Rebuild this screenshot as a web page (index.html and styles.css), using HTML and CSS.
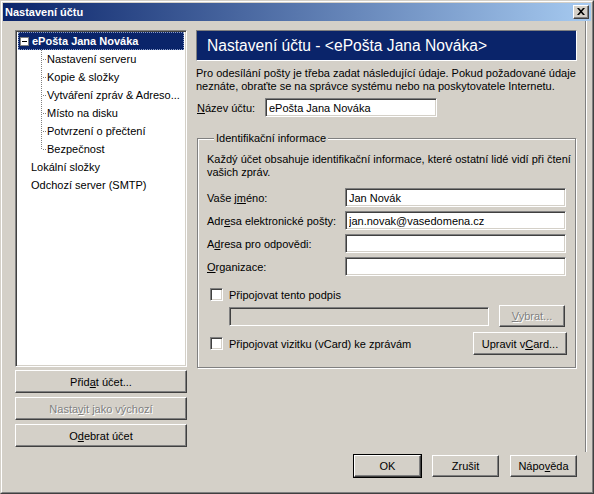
FILE: index.html
```html
<!DOCTYPE html>
<html lang="cs">
<head>
<meta charset="utf-8">
<title>Nastavení účtu</title>
<link rel="stylesheet" href="styles.css">
</head>
<body>
<div class="window">
  <div class="frame">
    <div class="titlebar">
      <span class="title">Nastavení účtu</span>
      <span class="close"><svg width="8" height="7" viewBox="0 0 8 7"><path d="M0 0h2l2 2.2L6 0h2L5 3.5 8 7H6L4 4.8 2 7H0l3-3.5z" fill="#000"/></svg></span>
    </div>
    <div class="content">
      <div class="left">
        <div class="tree">
          <div class="row top selected"><span class="minus"></span><span class="sel-text">ePošta Jana Nováka</span></div>
          <ul class="children">
            <li>Nastavení serveru</li>
            <li>Kopie &amp; složky</li>
            <li>Vytváření zpráv &amp; Adreso...</li>
            <li>Místo na disku</li>
            <li>Potvrzení o přečtení</li>
            <li class="last">Bezpečnost</li>
          </ul>
          <div class="row top plain">Lokální složky</div>
          <div class="row top plain">Odchozí server (SMTP)</div>
        </div>
        <button class="btn wide">Přid<u>a</u>t účet...</button>
        <button class="btn wide disabled">Nasta<u>v</u>it jako výchozí</button>
        <button class="btn wide">O<u>d</u>ebrat účet</button>
      </div>
      <div class="right">
        <div class="header">Nastavení účtu - &lt;ePošta Jana Nováka&gt;</div>
        <p class="intro">Pro odesílání pošty je třeba zadat následující údaje. Pokud požadované údaje<br>neznáte, obraťte se na správce systému nebo na poskytovatele Internetu.</p>
        <div class="name-row">
          <label class="name-label"><u>N</u>ázev účtu:</label>
          <input class="field name-field" type="text" value="ePošta Jana Nováka">
        </div>
        <fieldset class="group">
          <legend>Identifikační informace</legend>
          <p class="group-intro">Každý účet obsahuje identifikační informace, které ostatní lidé vidí při čtení<br>vašich zpráv.</p>
          <div class="frow"><label class="flabel">Vaše j<u>m</u>éno:</label><input class="field ffield" type="text" value="Jan Novák"></div>
          <div class="frow"><label class="flabel">Adr<u>e</u>sa elektronické pošty:</label><input class="field ffield" type="text" value="jan.novak@vasedomena.cz"></div>
          <div class="frow"><label class="flabel">A<u>d</u>resa pro odpovědi:</label><input class="field ffield" type="text" value=""></div>
          <div class="frow"><label class="flabel"><u>O</u>rganizace:</label><input class="field ffield" type="text" value=""></div>
          <div class="crow first"><span class="check"></span><span class="clabel">Připojovat tento podpis</span></div>
          <div class="sigrow"><input class="field sig" type="text" value="" disabled><button class="btn pick disabled"><u>V</u>ybrat...</button></div>
          <div class="crow vcard"><span class="check"></span><span class="clabel">Připojovat vizitku (vCard) ke zprávám</span><button class="btn edit">Upravit v<u>C</u>ard...</button></div>
        </fieldset>
      </div>
      <div class="edge"></div>
    </div>
    <div class="footer">
      <button class="btn dlg default">OK</button>
      <button class="btn dlg">Zrušit</button>
      <button class="btn dlg">Nápo<u>v</u>ěda</button>
    </div>
  </div>
</div>
</body>
</html>
```
FILE: styles.css
```css
html, body {
  margin: 0;
  padding: 0;
  background: #d4d0c8;
}
body {
  font-family: "Liberation Sans", Arial, sans-serif;
  font-size: 11px;
  color: #000;
}
.window {
  width: 594px;
  height: 494px;
  box-sizing: border-box;
  border: 1px solid;
  border-color: #d4d0c8 #404040 #404040 #d4d0c8;
}
.frame {
  height: 100%;
  box-sizing: border-box;
  border: 1px solid;
  border-color: #fff #808080 #808080 #fff;
  padding: 1px;
  display: flex;
  flex-direction: column;
}
.titlebar {
  height: 18px;
  flex: none;
  display: flex;
  align-items: center;
  background: linear-gradient(to right, #0a246a, #a6caf0);
  padding-left: 2px;
}
.title {
  color: #fff;
  font-weight: bold;
  flex: 1;
}
.close {
  width: 16px;
  height: 14px;
  box-sizing: border-box;
  margin-right: 2px;
  background: #d4d0c8;
  border: 1px solid;
  border-color: #fff #404040 #404040 #fff;
  box-shadow: inset -1px -1px #808080;
  display: flex;
  align-items: center;
  justify-content: center;
  padding: 0 1px 1px 0;
}
.close svg { display: block; }
.content {
  flex: 1;
  display: flex;
  padding: 0 0 0 12px;
}
.left {
  width: 172px;
  display: flex;
  flex-direction: column;
  margin-top: 9px;
}
.tree {
  height: 337px;
  box-sizing: border-box;
  background: #fff;
  border: 1px solid;
  border-color: #808080 #fff #fff #808080;
  box-shadow: inset 1px 1px #404040, inset -1px -1px #d4d0c8;
  padding: 1px 2px;
  margin-bottom: 3px;
}
.row {
  height: 18px;
  line-height: 18px;
  white-space: nowrap;
}
.row.selected {
  background: #0a246a;
  color: #fff;
  font-weight: bold;
  display: flex;
  align-items: center;
  outline: 1px dotted #8a9cc8;
  outline-offset: -1px;
}
.minus {
  width: 9px;
  height: 9px;
  box-sizing: border-box;
  border: 1px solid #808080;
  background: #fff linear-gradient(#000, #000) no-repeat center / 5px 1px;
  margin-left: 2px;
  margin-right: 3px;
  flex: none;
}
.row.plain {
  padding-left: 13px;
}
.children {
  list-style: none;
  margin: 0;
  padding: 0;
}
.children li {
  position: relative;
  height: 18px;
  line-height: 18px;
  padding-left: 29px;
  white-space: nowrap;
}
.children li::before {
  content: "";
  position: absolute;
  left: 23px;
  top: 0;
  width: 1px;
  height: 18px;
  background: repeating-linear-gradient(to bottom, #808080 0 1px, transparent 1px 2px);
}
.children li.last::before {
  height: 9px;
}
.children li::after {
  content: "";
  position: absolute;
  left: 24px;
  top: 9px;
  width: 5px;
  height: 1px;
  background: repeating-linear-gradient(to right, transparent 0 1px, #808080 1px 2px);
}
.btn {
  font-family: inherit;
  font-size: 11px;
  color: #000;
  background: #d4d0c8;
  border: 1px solid;
  border-color: #fff #404040 #404040 #fff;
  box-shadow: inset -1px -1px #808080;
  padding: 0;
  margin: 0;
  box-sizing: border-box;
}
.btn.disabled {
  color: #808080;
  text-shadow: 1px 1px #fff;
}
.btn.wide {
  width: 172px;
  height: 23px;
  margin-bottom: 4px;
}
.right {
  margin-left: 9px;
  margin-top: 9px;
  width: 381px;
}
.header {
  height: 31px;
  box-sizing: border-box;
  border: 1px solid;
  border-color: #808080 #fff #fff #808080;
  background: #0a246a;
  color: #fff;
  font-size: 15.6px;
  line-height: 29px;
  padding-left: 10px;
  white-space: nowrap;
}
.intro {
  margin: 6px 0 0 0;
  line-height: 13px;
  white-space: nowrap;
}
.name-row {
  display: flex;
  align-items: center;
  margin-top: 5px;
  height: 19px;
}
.name-label {
  width: 68px;
  padding-left: 1px;
}
.field {
  font-family: inherit;
  font-size: 11px;
  color: #000;
  height: 19px;
  box-sizing: border-box;
  background: #fff;
  border: 1px solid;
  border-color: #808080 #fff #fff #808080;
  box-shadow: inset 1px 1px #404040, inset -1px -1px #d4d0c8;
  padding: 0 2px 0 3px;
  margin: 0;
  outline: none;
}
.name-field {
  width: 172px;
}
.group {
  margin: 15px 0 0 1px;
  width: 379px;
  box-sizing: border-box;
  border: 1px solid #808080;
  box-shadow: inset 1px 1px #fff, 1px 1px #fff;
  padding: 0 8px 12px 9px;
  min-width: 0;
}
.group legend {
  padding: 0 2px;
  margin-left: 7px;
  line-height: 13px;
  background: #d4d0c8;
}
.group-intro {
  margin: 8px 0 9px 0;
  line-height: 13px;
  white-space: nowrap;
}
.frow {
  display: flex;
  align-items: center;
  height: 19px;
  margin-bottom: 4px;
}
.flabel {
  width: 138px;
  flex: none;
}
.ffield {
  width: 221px;
}
.crow {
  display: flex;
  align-items: center;
}
.crow.first {
  margin-top: 12px;
  height: 13px;
}
.check {
  width: 13px;
  height: 13px;
  box-sizing: border-box;
  background: #fff;
  border: 1px solid;
  border-color: #808080 #fff #fff #808080;
  box-shadow: inset 1px 1px #404040, inset -1px -1px #d4d0c8;
  margin-left: 3px;
  flex: none;
}
.clabel {
  margin-left: 6px;
  white-space: nowrap;
}
.sigrow {
  display: flex;
  align-items: center;
  height: 22px;
  margin-top: 4px;
}
.sig {
  width: 260px;
  margin-left: 22px;
  background: #d4d0c8;
}
.btn.pick {
  width: 66px;
  height: 22px;
  margin-left: 10px;
}
.crow.vcard {
  margin-top: 5px;
  height: 23px;
}
.btn.edit {
  margin-left: auto;
  width: 94px;
  height: 23px;
}
.edge {
  width: 0;
  margin: 0 0 3px 8px;
  border-left: 1px solid #808080;
  border-right: 1px solid #fff;
}
.footer {
  flex: none;
  display: flex;
  justify-content: flex-end;
  gap: 11px;
  padding: 0 14px 14px 0;
}
.btn.dlg {
  width: 67px;
  height: 22px;
}
.btn.default {
  outline: 1px solid #000;
  outline-offset: 0;
}
```
